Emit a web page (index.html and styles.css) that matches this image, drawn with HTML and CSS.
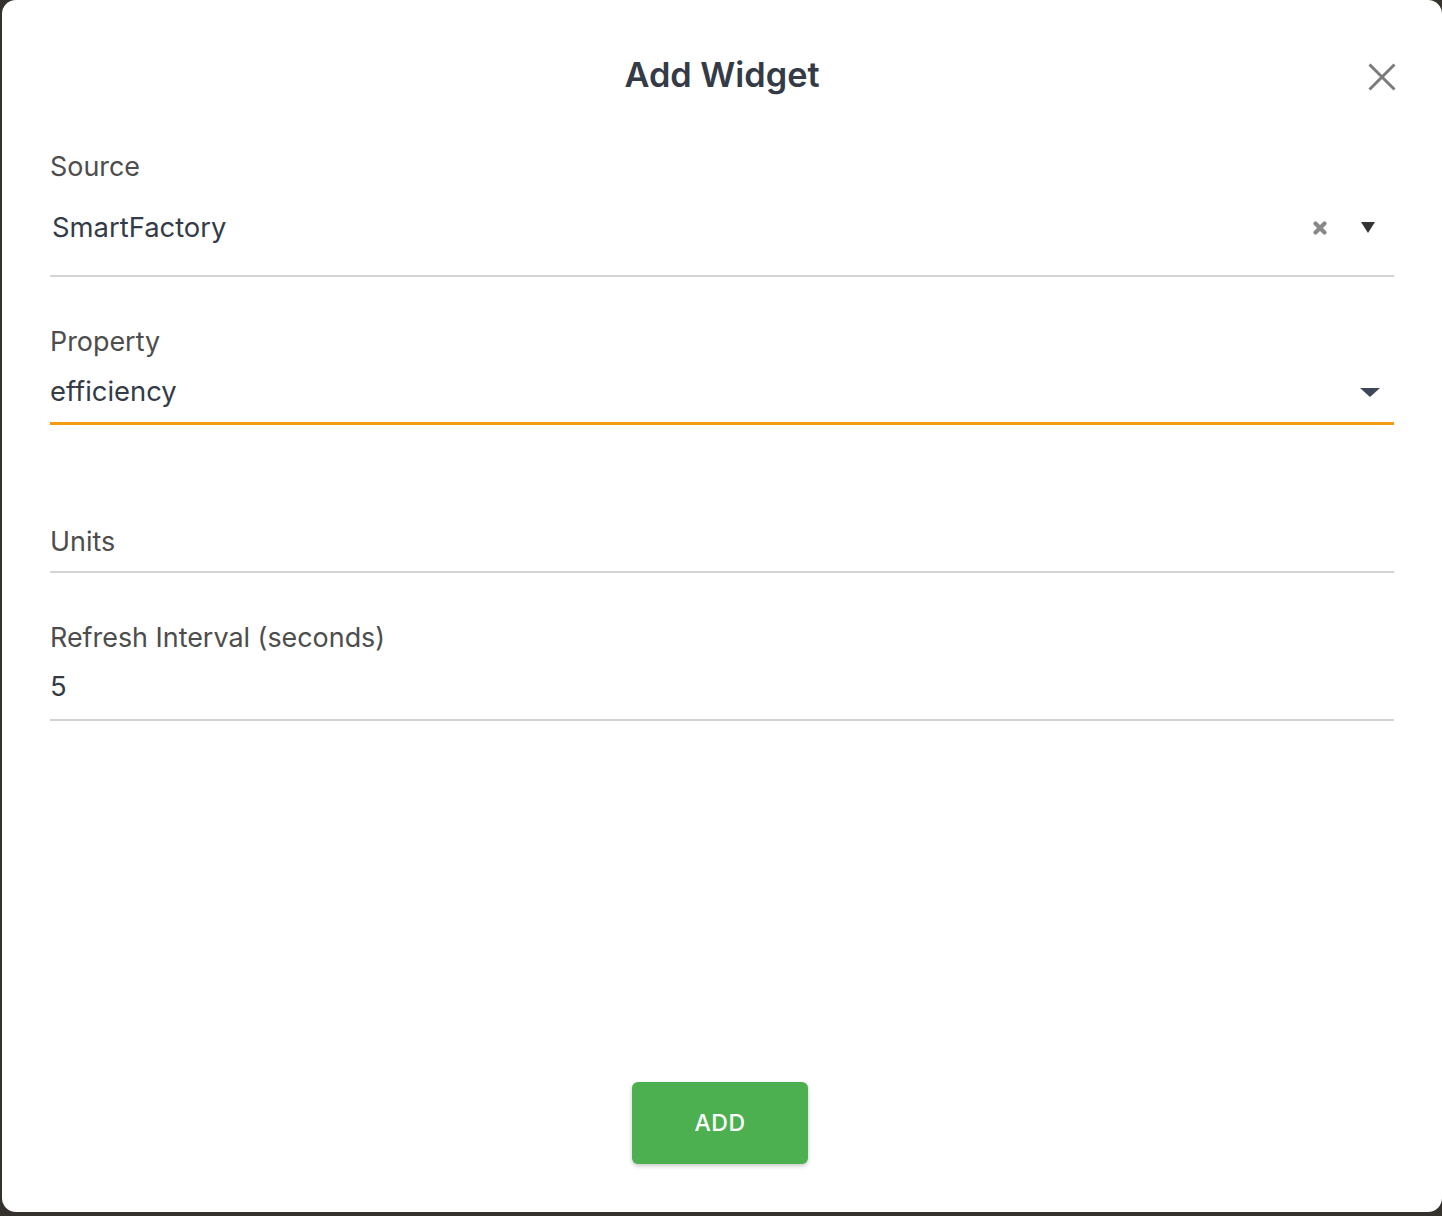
FILE: index.html
```html
<!DOCTYPE html>
<html lang="en">
<head>
<meta charset="utf-8">
<title>Add Widget</title>
<link rel="stylesheet" href="styles.css">
</head>
<body>
<div class="modal">
  <div class="header">
    <h1 class="title">Add Widget</h1>
    <button class="close" aria-label="Close">
      <svg width="28" height="28" viewBox="0 0 28 28"><path d="M1.5 1.5 L26.5 26.5 M26.5 1.5 L1.5 26.5" stroke="#7b7b7b" stroke-width="3" fill="none"/></svg>
    </button>
  </div>

  <div class="field source">
    <div class="label">Source</div>
    <div class="select-row">
      <span class="value">SmartFactory</span>
      <span class="icons">
        <svg class="clear" width="14" height="14" viewBox="0 0 14 14"><path d="M2.5 2.5 L11.5 11.5 M11.5 2.5 L2.5 11.5" stroke="#888" stroke-width="4.2" stroke-linecap="round"/></svg>
        <svg class="caret" width="14" height="11" viewBox="0 0 14 11"><path d="M0 0 H14 L7 11 Z" fill="#333"/></svg>
      </span>
    </div>
  </div>

  <div class="field property">
    <div class="label">Property</div>
    <div class="select-row focused">
      <span class="value">efficiency</span>
      <svg class="caret2" width="20" height="9" viewBox="0 0 20 9"><path d="M0 0 H20 L10 9 Z" fill="#3d4757"/></svg>
    </div>
  </div>

  <div class="field units">
    <div class="input-row">
      <span class="label">Units</span>
    </div>
  </div>

  <div class="field refresh">
    <div class="label">Refresh Interval (seconds)</div>
    <div class="input-row value-row">
      <span class="value">5</span>
    </div>
  </div>

  <div class="actions">
    <button class="add">ADD</button>
  </div>
</div>
</body>
</html>
```

FILE: styles.css
```css
html, body {
  margin: 0;
  padding: 0;
}
body {
  background: #35322d;
  width: 1442px;
  height: 1216px;
  overflow: hidden;
  font-family: Inter, "Noto Sans", "Liberation Sans", sans-serif;
}
.modal {
  margin-left: 2px;
  width: 1440px;
  height: 1212px;
  box-sizing: border-box;
  background: #ffffff;
  border-radius: 14px;
  padding: 51px 48px 48px 48px;
  display: flex;
  flex-direction: column;
}
.header {
  position: relative;
  height: 48px;
}
.title {
  margin: 0;
  text-align: center;
  font-size: 34.3px;
  line-height: 48px;
  font-weight: 600;
  color: #343b47;
}
.close {
  position: absolute;
  right: -2px;
  top: 12px;
  width: 28px;
  height: 28px;
  padding: 0;
  border: 0;
  background: none;
  display: block;
}
.close svg { display: block; }

.label {
  font-size: 26.9px;
  line-height: 32px;
  color: #4d4d4d;
}
.value {
  font-size: 27.4px;
  line-height: 48px;
  color: #343b48;
}
.field.source { margin-top: 51px; }
.select-row {
  display: flex;
  align-items: center;
  justify-content: space-between;
}
.source .select-row {
  margin-top: 21px;
  padding-bottom: 24px;
  border-bottom: 2px solid #d3d3d3;
}
.source .value { padding-left: 2px; }
.icons {
  display: flex;
  align-items: center;
  gap: 34px;
  padding-right: 19px;
}
.icons svg { display: block; }
.clear { margin-top: 2px; }

.field.property { margin-top: 48px; }
.property .select-row {
  margin-top: 10px;
  padding-bottom: 7px;
  border-bottom: 3px solid #f39c12;
}
.caret2 { display: block; margin-right: 14px; margin-top: 2px; }

.field.units { margin-top: 100px; }
.input-row {
  border-bottom: 2px solid #d3d3d3;
}
.units .input-row { padding-bottom: 14px; }
.units .label { display: block; }

.field.refresh { margin-top: 48px; }
.refresh .value-row {
  margin-top: 9px;
  padding-bottom: 9px;
}
.refresh .value { display: block; }

.actions {
  margin-top: auto;
  display: flex;
  justify-content: center;
}
.add {
  width: 176px;
  height: 82px;
  margin-left: -4px;
  border: 0;
  border-radius: 6px;
  background: #4caf50;
  color: #ffffff;
  font-family: Inter, "Noto Sans", "Liberation Sans", sans-serif;
  font-size: 23px;
  font-weight: 500;
  letter-spacing: 0.5px;
  box-shadow: 0 2px 4px rgba(0,0,0,0.22);
}
```
